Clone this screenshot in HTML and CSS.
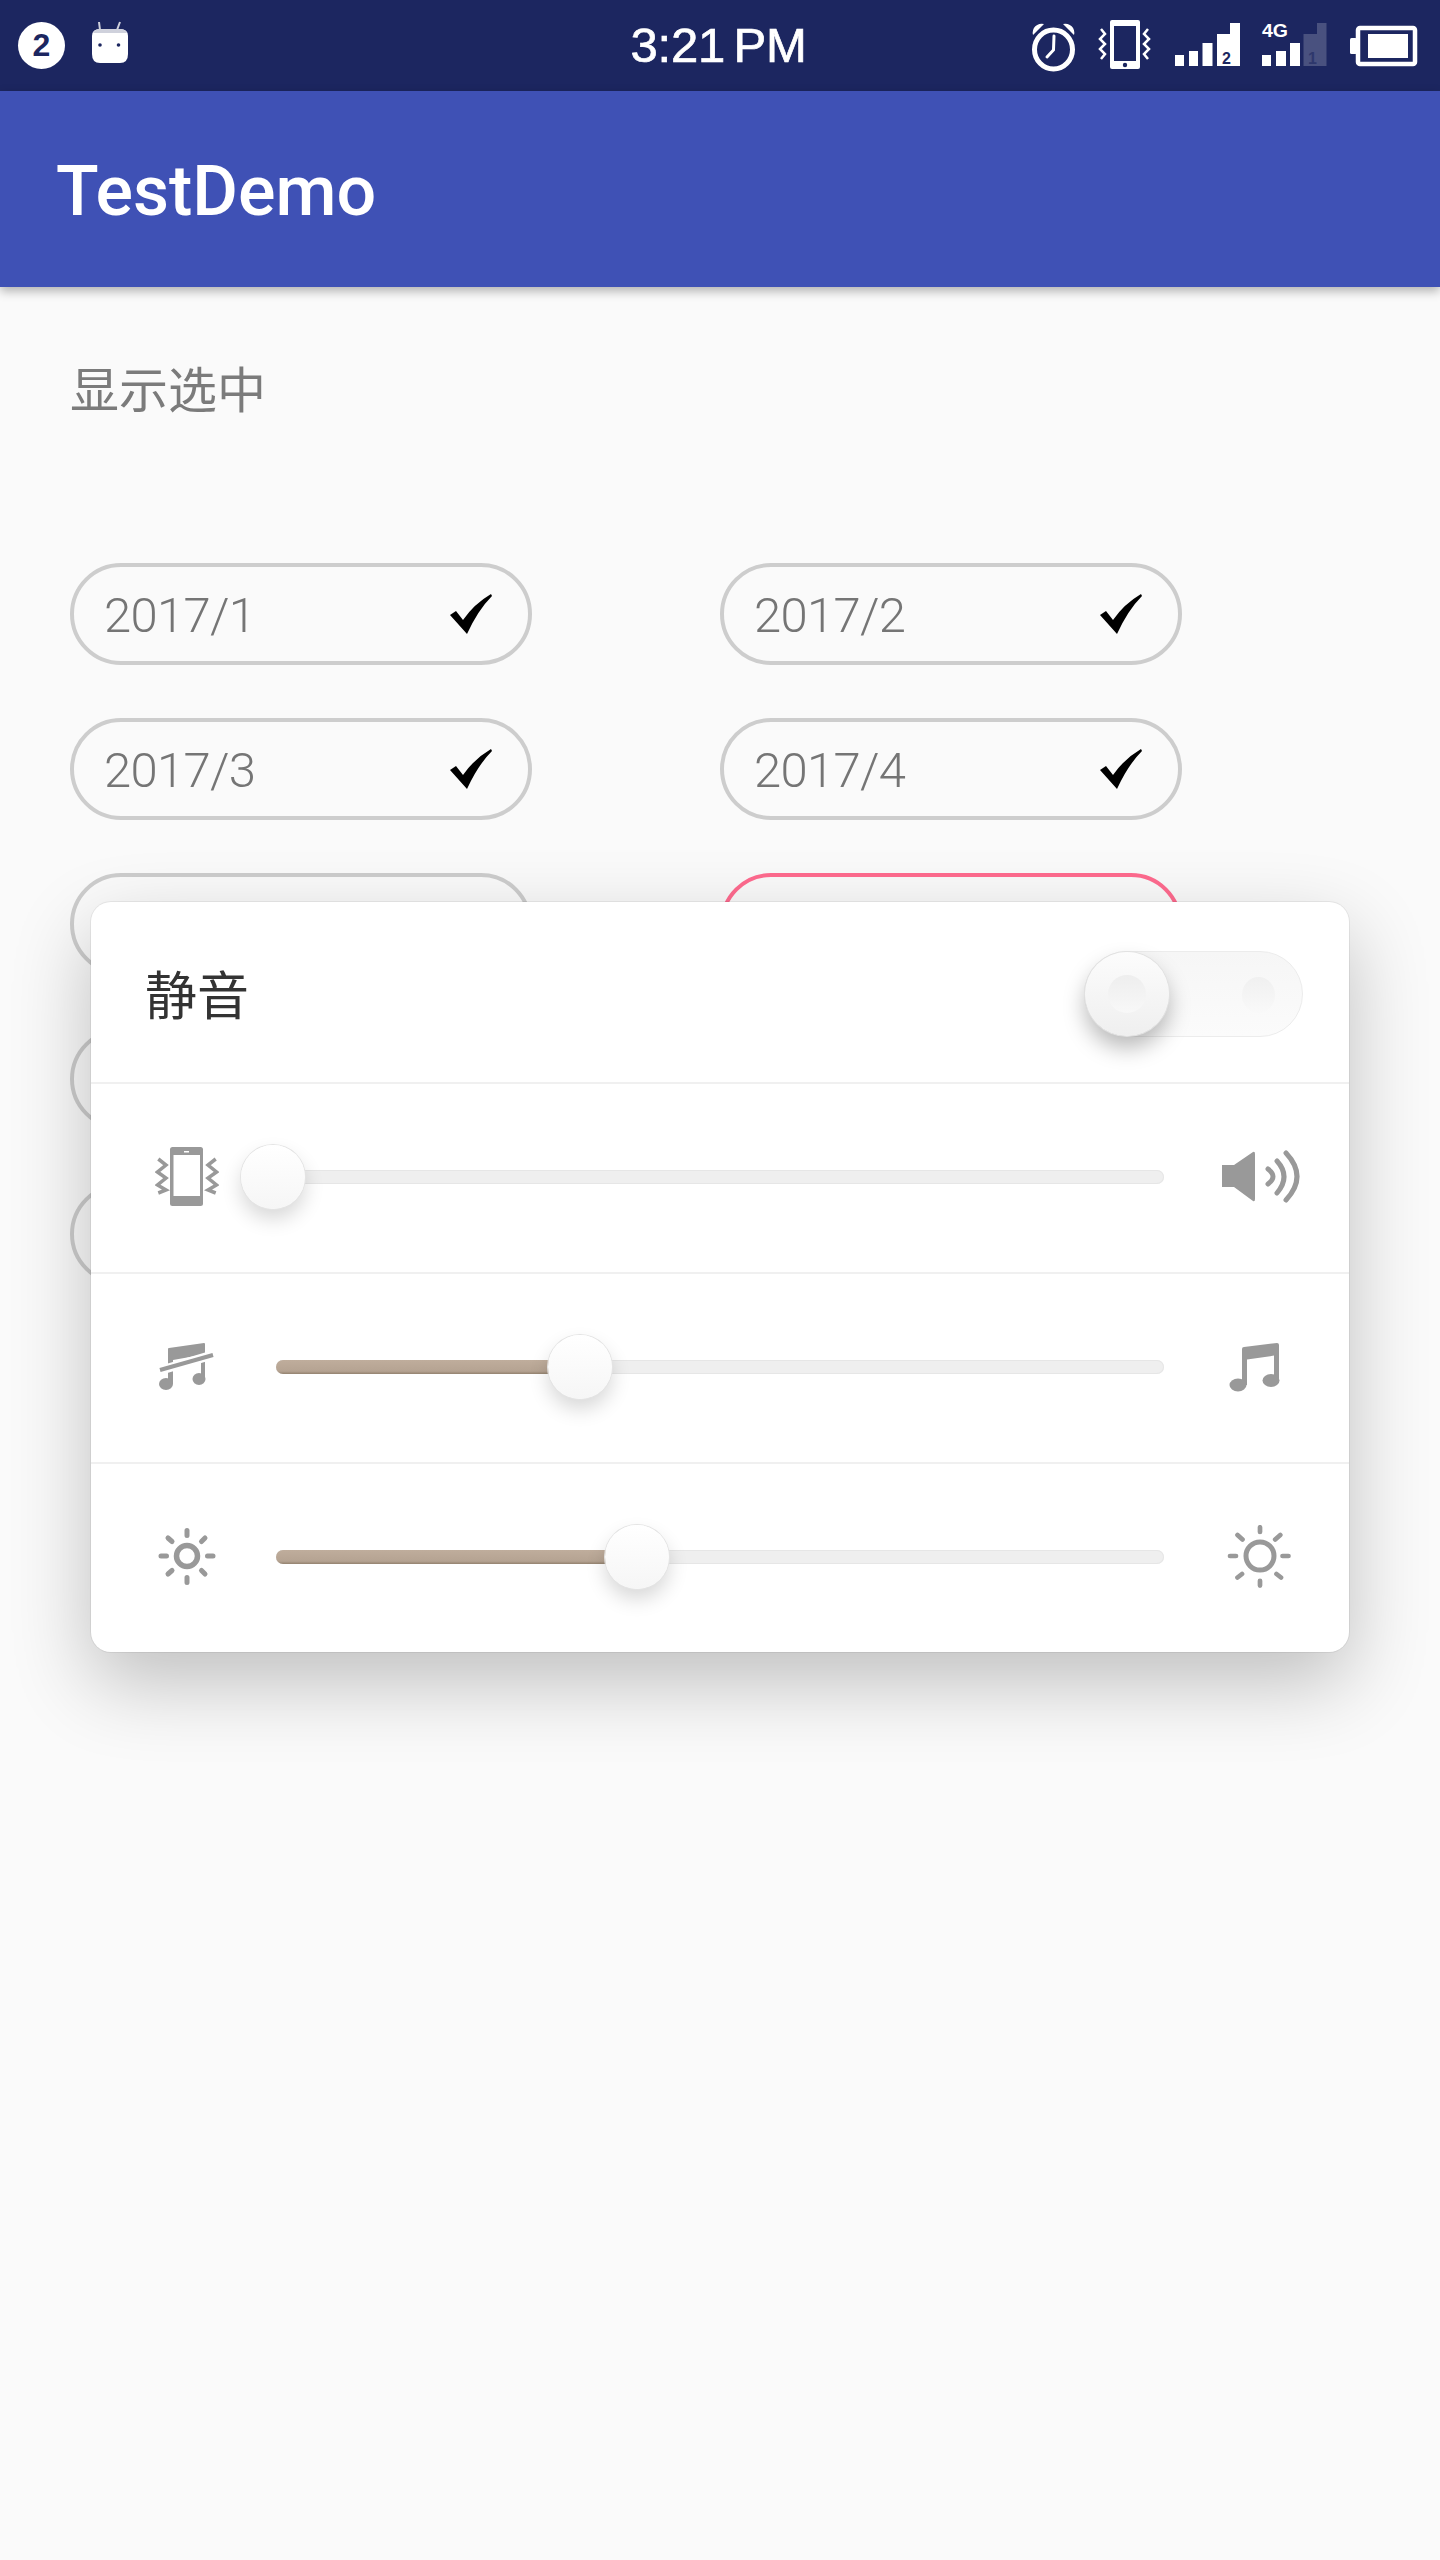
FILE: index.html
```html
<!DOCTYPE html>
<html lang="zh">
<head>
  <meta charset="UTF-8" />
  <meta name="viewport" content="width=device-width, initial-scale=1.0" />
  <title>TestDemo</title>
  <link rel="stylesheet" href="styles.css">
</head>
<body>
  <div class="status-bar">
    <div class="status-left">
      <span class="badge">2</span>
      <svg class="si" width="36" height="91" viewBox="0 0 36 91">
        <path d="M8 30 L7 22 M25 30 L28 22" stroke="#cfd1dc" stroke-width="2" fill="none"/>
        <path d="M0 36 Q0 29 8 29 H28 Q36 29 36 36 V54 Q36 63 28 63 H8 Q0 63 0 54 Z" fill="#fff"/>
        <path d="M1 33 Q3 29 8 29 H28 Q33 29 35 33 Z" fill="#cfd1dc"/>
        <circle cx="8" cy="45" r="1.8" fill="#1c2660"/>
        <circle cx="26.500" cy="45" r="1.8" fill="#1c2660"/>
      </svg>
    </div>
    <div class="clock">3:21 PM</div>
    <div class="status-right">
      <svg class="si" width="43" height="91" viewBox="0 0 43 91">
        <path d="M1 35 A9 9 0 0 1 12 24 Z M42 35 A9 9 0 0 0 31 24 Z" fill="#fff"/>
        <ellipse cx="21.500" cy="49.500" rx="19" ry="19.500" fill="none" stroke="#fff" stroke-width="5"/>
        <path d="M22 36 L21.500 50 L15 57" fill="none" stroke="#fff" stroke-width="3" stroke-linecap="round"/>
      </svg>
      <svg class="si" width="53" height="91" viewBox="0 0 53 91">
        <rect x="12" y="20" width="30" height="49" rx="2" fill="#fff"/>
        <rect x="16" y="26" width="22" height="35" fill="#1c2660"/>
        <circle cx="27" cy="65" r="2.200" fill="#1c2660"/>
        <path d="M3 29 L7 34 L2 39 L7 44 L2 49 L7 54 L3 59 M50 29 L46 34 L51 39 L46 44 L51 49 L46 54 L50 59" fill="none" stroke="#fff" stroke-width="2.500"/>
      </svg>
      <svg class="si" width="65" height="91" viewBox="0 0 65 91">
        <path d="M1 55 H10 V66 H1 Z M15 51 H24 V66 H15 Z M28.500 43 H38.500 V66 H28.500 Z M43 34 H56 V23 H66 V66 H43 Z" fill="#fff"/>
        <text class="sim-no" x="48" y="64">2</text>
      </svg>
      <svg class="si" width="65" height="91" viewBox="0 0 65 91">
        <text class="net" x="0" y="37" textLength="26" lengthAdjust="spacingAndGlyphs">4G</text>
        <path d="M0 55 H9 V66 H0 Z M14 51 H24 V66 H14 Z M28 43 H38 V66 H28 Z" fill="#fff"/>
        <path d="M41.500 34 H55 V23 H64.500 V66 H41.500 Z" fill="#fff" fill-opacity=".2"/>
        <text class="sim-no dim" x="46" y="64">1</text>
      </svg>
      <svg class="si" width="67" height="91" viewBox="0 0 67 91">
        <rect x="0" y="38" width="7" height="16" rx="1.500" fill="#fff"/>
        <rect x="8" y="28" width="57" height="36" rx="2" fill="#1c2660" stroke="#fff" stroke-width="4.500"/>
        <rect x="18" y="34" width="40" height="24" fill="#fff"/>
      </svg>
    </div>
  </div>

  <header class="app-bar">TestDemo</header>

  <main class="content">
    <p class="show-selected">显示选中</p>

    <div class="pill-grid">
      <div class="pill"><span>2017/1</span><svg class="check" width="42" height="40" viewBox="0 0 42 40"><path d="M0 21 L6 17 L13 26 Q24 10 41 0 L42 2 Q28 16 17 40 Z"/></svg></div>
      <div class="pill"><span>2017/2</span><svg class="check" width="42" height="40" viewBox="0 0 42 40"><path d="M0 21 L6 17 L13 26 Q24 10 41 0 L42 2 Q28 16 17 40 Z"/></svg></div>
      <div class="pill"><span>2017/3</span><svg class="check" width="42" height="40" viewBox="0 0 42 40"><path d="M0 21 L6 17 L13 26 Q24 10 41 0 L42 2 Q28 16 17 40 Z"/></svg></div>
      <div class="pill"><span>2017/4</span><svg class="check" width="42" height="40" viewBox="0 0 42 40"><path d="M0 21 L6 17 L13 26 Q24 10 41 0 L42 2 Q28 16 17 40 Z"/></svg></div>
      <div class="pill"></div>
      <div class="pill pill-active"></div>
      <div class="pill"></div>
      <div class="pill"></div>
      <div class="pill"></div>
      <div class="pill"></div>
    </div>
  </main>

  <section class="panel">
    <div class="panel-head">
      <span class="panel-title">静音</span>
      <div class="toggle">
        <span class="toggle-dot"></span>
        <div class="toggle-knob"><span class="toggle-knob-dot"></span></div>
      </div>
    </div>

    <div class="slider-row">
      <svg class="icon-left" width="64" height="64" viewBox="0 0 64 64">
        <rect x="15" y="2" width="33" height="59" rx="2.500" fill="#999"/>
        <rect x="18.500" y="10" width="26.500" height="41" fill="#fff"/>
        <rect x="29" y="6" width="5" height="1.500" fill="#fff"/>
        <path d="M3.300 14 L11 20 L2.500 27 L11 33 L2.500 40 L11 45 L3.300 48 M60.700 14 L53 20 L61.500 27 L53 33 L61.500 40 L53 45 L60.700 48" fill="none" stroke="#999" stroke-width="3.500"/>
      </svg>
      <div class="track"><div class="fill" style="width:0"><span class="knob"></span></div></div>
      <svg class="icon-right" width="80" height="64" viewBox="0 0 80 64">
        <path d="M2 20 H14 L33 7 Q35 6 35 9 V54 Q35 57 33 56 L14 42 H2 Z" fill="#999"/>
        <path d="M48 24 Q58 31.500 48 39 M57 16 Q71 31.500 57 48 M66 8 Q88 31.500 66 55" fill="none" stroke="#999" stroke-width="5" stroke-linecap="round"/>
      </svg>
    </div>

    <div class="slider-row">
      <svg class="icon-left" width="64" height="64" viewBox="0 0 64 64">
        <path d="M13 14 Q13 13 14 13 L49 8 Q50 8 50 9 V44 H46 V20 L18 25 V49 H13 Z" fill="#999"/>
        <ellipse cx="11" cy="49" rx="7" ry="6" fill="#999"/>
        <ellipse cx="44" cy="44" rx="6.500" ry="6" fill="#999"/>
        <path d="M0 37 L64 18" stroke="#fff" stroke-width="9"/>
        <path d="M5 35 L58 20" stroke="#999" stroke-width="4"/>
      </svg>
      <div class="track"><div class="fill" style="width:307px"><span class="knob"></span></div></div>
      <svg class="icon-right" width="80" height="64" viewBox="0 0 80 64">
        <path d="M22 14 Q22 12 24 12 L57 8 Q59 8 59 10 V46 H54 V20.600 L27 24.500 V50 H22 Z" fill="#999"/>
        <ellipse cx="18" cy="50" rx="8.500" ry="6.500" fill="#999"/>
        <ellipse cx="51" cy="45.500" rx="8.500" ry="6.500" fill="#999"/>
      </svg>
    </div>

    <div class="slider-row">
      <svg class="icon-left" width="64" height="64" viewBox="0 0 64 64">
        <circle cx="32" cy="31" r="10.500" fill="none" stroke="#999" stroke-width="5.500"/>
        <path d="M32 5.500 V10.500 M32 52.500 V57.500 M6 31 H11.500 M52.500 31 H58 M13 13 L17 16.500 M50 13 L46.500 16.500 M13 49 L17 45.500 M50 49 L46.500 45.500" stroke="#999" stroke-width="5" stroke-linecap="round"/>
      </svg>
      <div class="track"><div class="fill" style="width:364px"><span class="knob"></span></div></div>
      <svg class="icon-right" width="80" height="64" viewBox="0 0 80 64">
        <circle cx="40" cy="31" r="14" fill="none" stroke="#999" stroke-width="5"/>
        <path d="M40 2.300 V7 M40 55.800 V60.600 M10 31 H16 M62.500 31 H68.500 M17.500 10 L22.500 14.500 M60.300 10 L55.200 14.500 M17.500 52.500 L22 49 M61 52.500 L56.500 49" stroke="#999" stroke-width="4.700" stroke-linecap="round"/>
      </svg>
    </div>
  </section>
</body>
</html>
```

FILE: styles.css
```css
:root {
  --indigo: #3f51b5;
  --indigo-dark: #1c2660;
  --fondo: #fafafa;
  --gris-texto: #757575;
  --borde: #cdcdcd;
  --rosa: #ff6b8f;
  --icono: #999999;
}

* {
  box-sizing: border-box;
}

body {
  margin: 0;
  min-height: 2560px;
  position: relative;
  background: var(--fondo);
  font-family: "Liberation Sans", "Noto Sans CJK SC", sans-serif;
}

/* status bar */
.status-bar {
  height: 91px;
  background: var(--indigo-dark);
  display: grid;
  grid-template-columns: 1fr auto 1fr;
  align-items: center;
  padding: 0 23px 0 18px;
  color: #fff;
}

.status-left {
  display: flex;
  align-items: center;
  gap: 27px;
}

.badge {
  width: 47px;
  height: 47px;
  margin-top: -1px;
  border-radius: 50%;
  background: #fff;
  color: var(--indigo-dark);
  font-size: 32px;
  font-weight: 700;
  line-height: 47px;
  text-align: center;
}

.si {
  display: block;
  overflow: visible;
}

.clock {
  font-size: 49px;
  letter-spacing: -0.2px;
  word-spacing: -5px;
  line-height: 91px;
  margin-left: 2px;
  -webkit-text-stroke: 0.7px #fff;
}

.status-right {
  display: flex;
  justify-content: flex-end;
  gap: 23px;
}

.sim-no {
  font-size: 16px;
  font-weight: 700;
  fill: var(--indigo-dark);
}

.sim-no.dim {
  fill: var(--indigo-dark);
  opacity: .6;
}

.net {
  font-size: 18px;
  font-weight: 700;
  fill: #fff;
}

/* app bar */
.app-bar {
  height: 196px;
  background: var(--indigo);
  box-shadow: 0 4px 10px rgba(0, 0, 0, .3);
  padding: 5px 0 0 56px;
  color: #fff;
  font-family: Roboto, sans-serif;
  font-size: 70px;
  font-weight: 500;
  line-height: 191px;
}

/* contenido */
.content {
  padding: 70px 0 0 70px;
}

.show-selected {
  margin: 0 0 146px;
  color: #7b7b7b;
  font-family: "Noto Sans CJK SC", sans-serif;
  font-size: 49px;
  font-weight: 400;
  line-height: 60px;
}

.pill-grid {
  display: grid;
  grid-template-columns: 462px 462px;
  column-gap: 188px;
  row-gap: 53px;
}

.pill {
  height: 102px;
  border: 4px solid var(--borde);
  border-radius: 51px;
  padding: 2px 36px 0 30px;
  display: flex;
  align-items: center;
  justify-content: space-between;
  color: var(--gris-texto);
  font-family: Roboto, sans-serif;
  font-size: 49px;
  font-weight: 300;
  letter-spacing: -0.700px;
}

.pill-active {
  border-color: var(--rosa);
}

.check {
  display: block;
  margin-top: -2px;
}

/* panel flotante */
.panel {
  position: absolute;
  left: 91px;
  top: 902px;
  width: 1258px;
  height: 750px;
  background: #fff;
  border-radius: 20px;
  box-shadow: 0 0 0 1px rgba(0, 0, 0, .06), 0 30px 80px rgba(0, 0, 0, .24);
}

.panel-head {
  height: 180px;
  padding: 0 46px 0 54px;
  display: flex;
  align-items: center;
  justify-content: space-between;
}

.panel-title {
  color: #333;
  font-family: "Noto Sans CJK SC", sans-serif;
  font-size: 52px;
}

.toggle {
  position: relative;
  width: 219px;
  height: 86px;
  margin-top: 3px;
  border-radius: 43px;
  background: linear-gradient(#f6f6f6, #fbfbfb);
  border: 1px solid #ececec;
}

.toggle-dot {
  position: absolute;
  right: 27px;
  top: 25px;
  width: 33px;
  height: 36px;
  border-radius: 50%;
  background: linear-gradient(#f0f0f0, #f9f9f9);
}

.toggle-knob {
  position: absolute;
  left: 0;
  top: 0;
  width: 84px;
  height: 84px;
  border-radius: 50%;
  display: flex;
  align-items: center;
  justify-content: center;
  background: linear-gradient(#fcfcfc, #efefef);
  box-shadow: 0 0 0 1px #e2e2e2, 0 12px 22px rgba(0, 0, 0, .28);
}

.toggle-knob-dot {
  width: 38px;
  height: 38px;
  border-radius: 50%;
  background: linear-gradient(#eeeeee, #f8f8f8);
}

.slider-row {
  height: 190px;
  border-top: 2px solid #f0f0f0;
  padding: 0 49px 2px 64px;
  display: flex;
  align-items: center;
}

.icon-left {
  flex: none;
  margin-right: 57px;
}

.icon-right {
  flex: none;
  margin-left: 56px;
}

.track {
  flex: 1;
  height: 14px;
  border-radius: 7px;
  background: #efefef;
  box-shadow: inset 0 0 0 1px #e6e6e6;
}

.fill {
  position: relative;
  height: 14px;
  border-radius: 7px;
  background: linear-gradient(#bfad9c, #b5a392 80%, #93826f);
}

.knob {
  position: absolute;
  right: -29px;
  top: -25px;
  width: 64px;
  height: 64px;
  border-radius: 50%;
  background: linear-gradient(#ffffff, #f6f6f6);
  box-shadow: 0 0 0 1px #e4e4e4, 0 10px 20px rgba(0, 0, 0, .16);
}
```
